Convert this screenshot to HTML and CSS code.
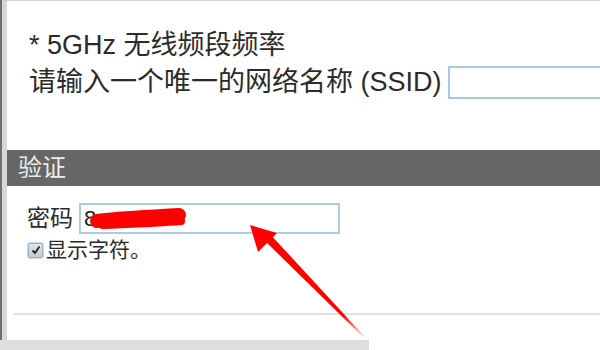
FILE: index.html
```html
<!DOCTYPE html>
<html lang="zh-CN">
<head>
    <meta charset="UTF-8">
    <title>无线设置</title>
    <link rel="stylesheet" href="styles.css">
</head>
<body>
    <div class="window">
        <div class="frame">
            <div class="page">
                <!-- 5GHz 无线 -->
                <div class="ssid-section">
                    <p class="band-title">* 5GHz 无线频段频率</p>
                    <div class="ssid-row">
                        <span class="ssid-label">请输入一个唯一的网络名称 (SSID)</span>
                        <input type="text" class="ssid-input">
                    </div>
                </div>

                <!-- 验证 -->
                <div class="section-head">验证</div>
                <div class="auth">
                    <div class="pwd-row">
                        <span class="pwd-label">密码</span>
                        <div class="pwd-field">
                            <input type="text" class="pwd-input" value="8">
                            <svg class="scribble" width="110" height="28" viewBox="0 0 110 28">
                                <path d="M10 17 C30 14 60 13 92 11" stroke="#f00" stroke-width="14" stroke-linecap="round" fill="none"/>
                                <path d="M16 21 C40 20 70 19 94 17" stroke="#f00" stroke-width="8" stroke-linecap="round" fill="none"/>
                            </svg>
                        </div>
                    </div>
                    <label class="show-chars">
                        <span class="checkbox">
                            <svg width="10" height="10" viewBox="0 0 10 10"><path d="M1.5 5.5 L4 8 L8.5 1.5" stroke="#222" stroke-width="1.8" fill="none"/></svg>
                        </span>
                        显示字符。
                    </label>
                </div>
                <div class="divider"></div>
            </div>
        </div>
        <div class="statusbar"></div>

        <!-- 标注箭头 -->
        <svg class="arrow" width="600" height="350" viewBox="0 0 600 350">
            <defs>
                <linearGradient id="fade" x1="251" y1="227" x2="366" y2="338" gradientUnits="userSpaceOnUse">
                    <stop offset="0" stop-color="#f00"/>
                    <stop offset="0.8" stop-color="#f00"/>
                    <stop offset="1" stop-color="#f00" stop-opacity="0"/>
                </linearGradient>
            </defs>
            <path d="M262 238 L269 233 L366 338 L365 339 Z" fill="url(#fade)"/>
            <path d="M250 225 L277 233 L258 252 Z" fill="#f00"/>
        </svg>
    </div>
</body>
</html>
```

FILE: styles.css
```css
* {
    margin: 0;
    padding: 0;
    box-sizing: border-box;
}

body {
    width: 600px;
    height: 350px;
    overflow: hidden;
    background: #fff;
    font-family: 'Liberation Sans', 'Noto Sans CJK SC', sans-serif;
    color: #2b2b2b;
}

.window {
    position: relative;
    width: 600px;
    height: 350px;
    display: flex;
    flex-direction: column;
}

.frame {
    height: 340px;
    border-left: 2px solid #6f6f6f;
    display: flex;
}

.page {
    flex: 1;
    border-left: 5px solid #d7d7d7;
    border-top: 1px solid #cfcfcf;
    display: flex;
    flex-direction: column;
}

.ssid-section {
    padding: 26px 0 0 22px;
    height: 149px;
}

.band-title {
    font-size: 27px;
    line-height: 36px;
}

.ssid-row {
    display: flex;
    align-items: center;
    gap: 6px;
    margin-top: 1px;
}

.ssid-label {
    font-size: 27px;
    line-height: 36px;
    white-space: nowrap;
}

.ssid-input {
    flex: 1;
    height: 33px;
    border: 2px solid #a9c6e6;
    outline: none;
}

.section-head {
    height: 36px;
    background: #666;
    color: #ececec;
    font-size: 24px;
    line-height: 36px;
    padding-left: 11px;
}

.auth {
    padding: 17px 0 0 20px;
    display: flex;
    flex-direction: column;
}

.pwd-row {
    display: flex;
    align-items: center;
    gap: 6px;
}

.pwd-label {
    font-size: 23px;
    line-height: 31px;
}

.pwd-field {
    position: relative;
}

.pwd-input {
    width: 261px;
    height: 31px;
    border: 2px solid #b0cbe8;
    outline: none;
    padding-left: 3px;
    font-family: 'Liberation Sans', sans-serif;
    font-size: 22px;
    color: #222;
}

.scribble {
    position: absolute;
    left: 8px;
    top: 1px;
}

.show-chars {
    display: flex;
    align-items: center;
    gap: 3px;
    margin: 4px 0 0 1px;
    font-size: 21px;
    line-height: 24px;
}

.checkbox {
    width: 15px;
    height: 15px;
    border: 1px solid #8fb0d8;
    border-radius: 2px;
    background: linear-gradient(#e6e6e6, #c9c9c9);
    box-shadow: 0 0 0 1px #c7dbf2;
    display: flex;
    align-items: center;
    justify-content: center;
}

.divider {
    margin: 51px 0 0 7px;
    height: 2px;
    background: #e2e2e2;
}

.statusbar {
    width: 369px;
    height: 10px;
    background: #dedede;
}

.arrow {
    position: absolute;
    left: 0;
    top: 0;
    pointer-events: none;
}
```
